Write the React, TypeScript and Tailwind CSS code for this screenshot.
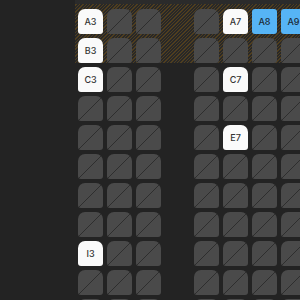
import React from "react";

type SeatState = "taken" | "free" | "selected";

// rows A..K, columns 3..10 with an aisle after 5
const rowLetters = ["A", "B", "C", "D", "E", "F", "G", "H", "I", "J", "K"];
const columns: (number | null)[] = [3, 4, 5, null, 6, 7, 8, 9, 10];

const freeSeats: Record<string, SeatState> = {
  A3: "free",
  A7: "free",
  A8: "selected",
  A9: "selected",
  B3: "free",
  C3: "free",
  C7: "free",
  E7: "free",
  I3: "free",
};

const Seat = ({ id }: { id: string }) => {
  const state: SeatState = freeSeats[id] ?? "taken";

  if (state === "taken") {
    return (
      <div className="relative w-[25px] h-[25px] shrink-0 rounded-t-[7px] rounded-b-[3px] bg-[#4a4a4a] overflow-hidden">
        <svg className="absolute inset-0" width="25" height="25" viewBox="0 0 25 25">
          <line x1="0" y1="25" x2="25" y2="0" stroke="#2e2e2e" strokeWidth="1" />
        </svg>
      </div>
    );
  }

  return (
    <div
      className={
        state === "selected"
          ? "w-[25px] h-[25px] shrink-0 rounded-[3px] bg-[#56b4f5] flex items-center justify-center text-[9px] font-medium text-[#1d2a36]"
          : "w-[25px] h-[25px] shrink-0 rounded-t-[7px] rounded-b-[3px] bg-[#fafafa] flex items-center justify-center text-[9px] font-medium text-[#333333]"
      }
    >
      {id}
    </div>
  );
};

const SeatRow = ({ letter }: { letter: string }) => (
  <div className="flex gap-[4px]">
    {columns.map((col, i) =>
      col === null ? (
        <div key={i} className="w-[25px] h-[25px] shrink-0" />
      ) : (
        <Seat key={i} id={`${letter}${col}`} />
      )
    )}
  </div>
);

export default function App() {
  return (
    <div
      className="w-[300px] h-[300px] bg-[#232323] overflow-hidden flex"
      style={{ fontFamily: "Inter, 'Noto Sans', sans-serif" }}
    >
      {/* empty left panel */}
      <div className="w-[75px] shrink-0" />

      <div className="flex flex-col flex-1 min-w-0">
        <div className="h-[4px] bg-[#2b2b2b] shrink-0" />

        {/* hatched premium rows */}
        <div className="flex flex-col gap-[4px] pt-[5px] pl-[3px] bg-[repeating-linear-gradient(-45deg,#4f3e1f_0px,#4f3e1f_1px,#282828_1px,#282828_2.4px)]">
          <SeatRow letter="A" />
          <SeatRow letter="B" />
        </div>

        {/* regular rows */}
        <div className="flex flex-col gap-[4px] pt-[4px] pl-[3px]">
          {rowLetters.slice(2).map((l) => (
            <SeatRow key={l} letter={l} />
          ))}
        </div>
      </div>
    </div>
  );
}
